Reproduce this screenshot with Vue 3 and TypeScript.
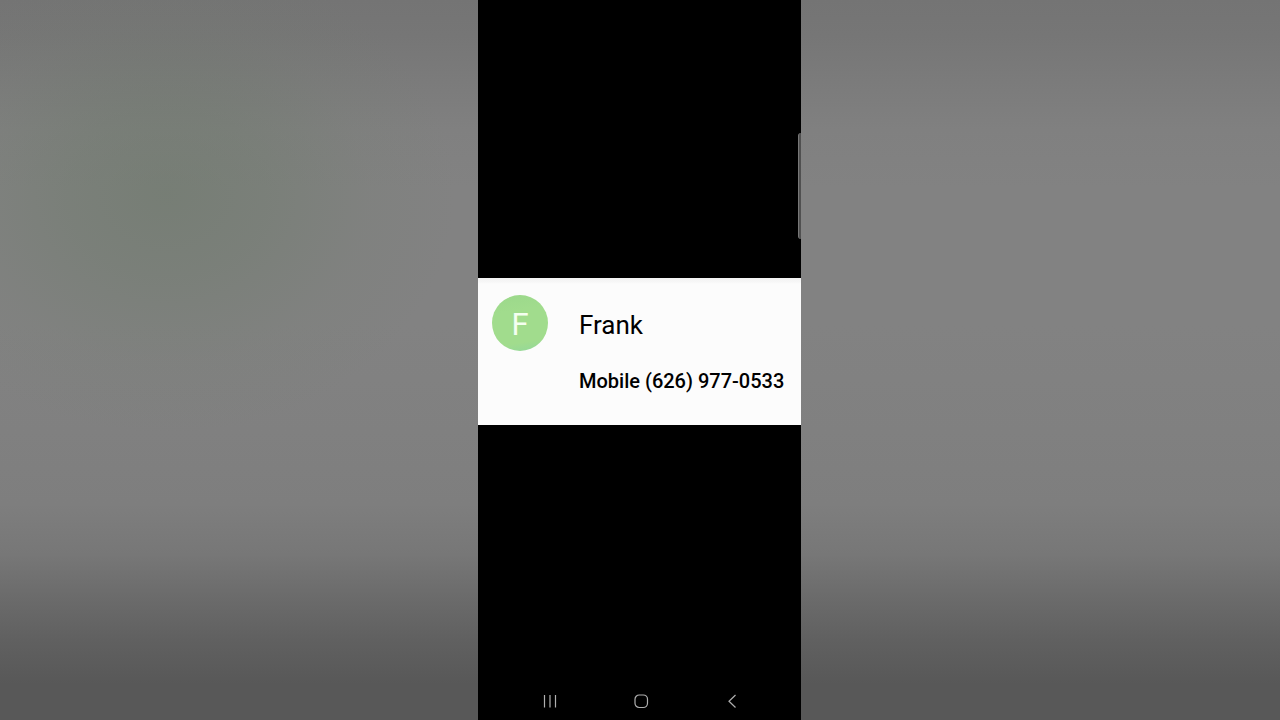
<script setup lang="ts">
interface Contact {
  name: string
  label: string
  phone: string
}

const contact: Contact = {
  name: 'Frank',
  label: 'Mobile',
  phone: '(626) 977-0533',
}

const initial: string = contact.name.charAt(0)
</script>

<template>
  <div class="stage">
    <main class="phone">
      <div class="upper">
        <span class="edge-handle"></span>
      </div>

      <section class="card">
        <div class="avatar" aria-hidden="true">{{ initial }}</div>
        <div class="details">
          <h1 class="name">{{ contact.name }}</h1>
          <p class="number">{{ contact.label }} {{ contact.phone }}</p>
        </div>
      </section>

      <div class="lower"></div>

      <nav class="navbar">
        <button type="button" class="nav-button" aria-label="Recent apps">
          <svg width="20" height="20" viewBox="0 0 20 20">
            <path d="M4.5 4v12.5M10 4v12.5M15.5 4v12.5" />
          </svg>
        </button>
        <button type="button" class="nav-button" aria-label="Home">
          <svg width="20" height="20" viewBox="0 0 20 20">
            <rect x="4" y="4" width="12.5" height="12.5" rx="4.2" />
          </svg>
        </button>
        <button type="button" class="nav-button" aria-label="Back">
          <svg width="20" height="20" viewBox="0 0 20 20">
            <path d="M13.5 4L7 10.2L13.5 16.5" />
          </svg>
        </button>
      </nav>
    </main>
  </div>
</template>

<style>
body {
  margin: 0;
}
</style>

<style scoped>
.stage {
  display: flex;
  justify-content: center;
  box-sizing: border-box;
  min-height: 100vh;
  padding-right: 1px;
  font-family: Roboto, "Liberation Sans", sans-serif;
  background:
    radial-gradient(ellipse 290px 240px at 13% 27%, rgba(98, 118, 94, 0.36) 0%, rgba(100, 120, 96, 0.26) 35%, rgba(112, 124, 108, 0.12) 70%, rgba(122, 124, 120, 0) 100%),
    linear-gradient(#747474 0%, #767676 5%, #7a7a7a 10%, #808080 18%, #828282 26%, #828282 45%, #808080 60%, #7e7e7e 70%, #777777 77%, #6b6b6b 83%, #606060 89%, #585858 95%, #585858 100%);
}

.phone {
  display: flex;
  flex-direction: column;
  flex: 0 1 323px;
  background: #000;
}

.upper {
  position: relative;
  flex: 278 0 0;
}

.edge-handle {
  position: absolute;
  right: 0;
  top: 48%;
  width: 3px;
  height: 38%;
  box-sizing: border-box;
  border-left: 1px solid #777;
  border-radius: 3px 0 0 3px;
  background: #505050;
}

.card {
  display: flex;
  gap: 31px;
  box-sizing: border-box;
  padding: 17px 14px 31px;
  background: linear-gradient(#f3f3f3 0, #f7f7f7 4px, #fcfcfc 6px);
}

.avatar {
  display: flex;
  align-items: center;
  justify-content: center;
  flex: none;
  width: 56px;
  height: 56px;
  box-sizing: border-box;
  padding-top: 3px;
  border-radius: 50%;
  background: linear-gradient(170deg, #9bd88b 0%, #a1dc8d 30%, #a1dc8d 80%, #91d79b 100%);
  color: #f4fff0;
  font-size: 31px;
  line-height: 36px;
}

.details {
  padding-top: 14px;
  color: #000;
  white-space: nowrap;
}

.name {
  margin: 0;
  font-size: 26px;
  font-weight: 400;
  line-height: 32px;
}

.number {
  margin: 28px 0 0;
  font-size: 20px;
  font-weight: 500;
  line-height: 25px;
}

.lower {
  flex: 257 0 0;
}

.navbar {
  display: flex;
  justify-content: space-between;
  height: 38px;
  padding: 0 59px 0 62px;
}

.nav-button {
  display: flex;
  align-items: center;
  justify-content: center;
  width: 20px;
  padding: 0;
  border: 0;
  background: none;
}

.nav-button svg {
  flex: none;
  fill: none;
  stroke: #b0b0b0;
  stroke-width: 1.2;
}
</style>
